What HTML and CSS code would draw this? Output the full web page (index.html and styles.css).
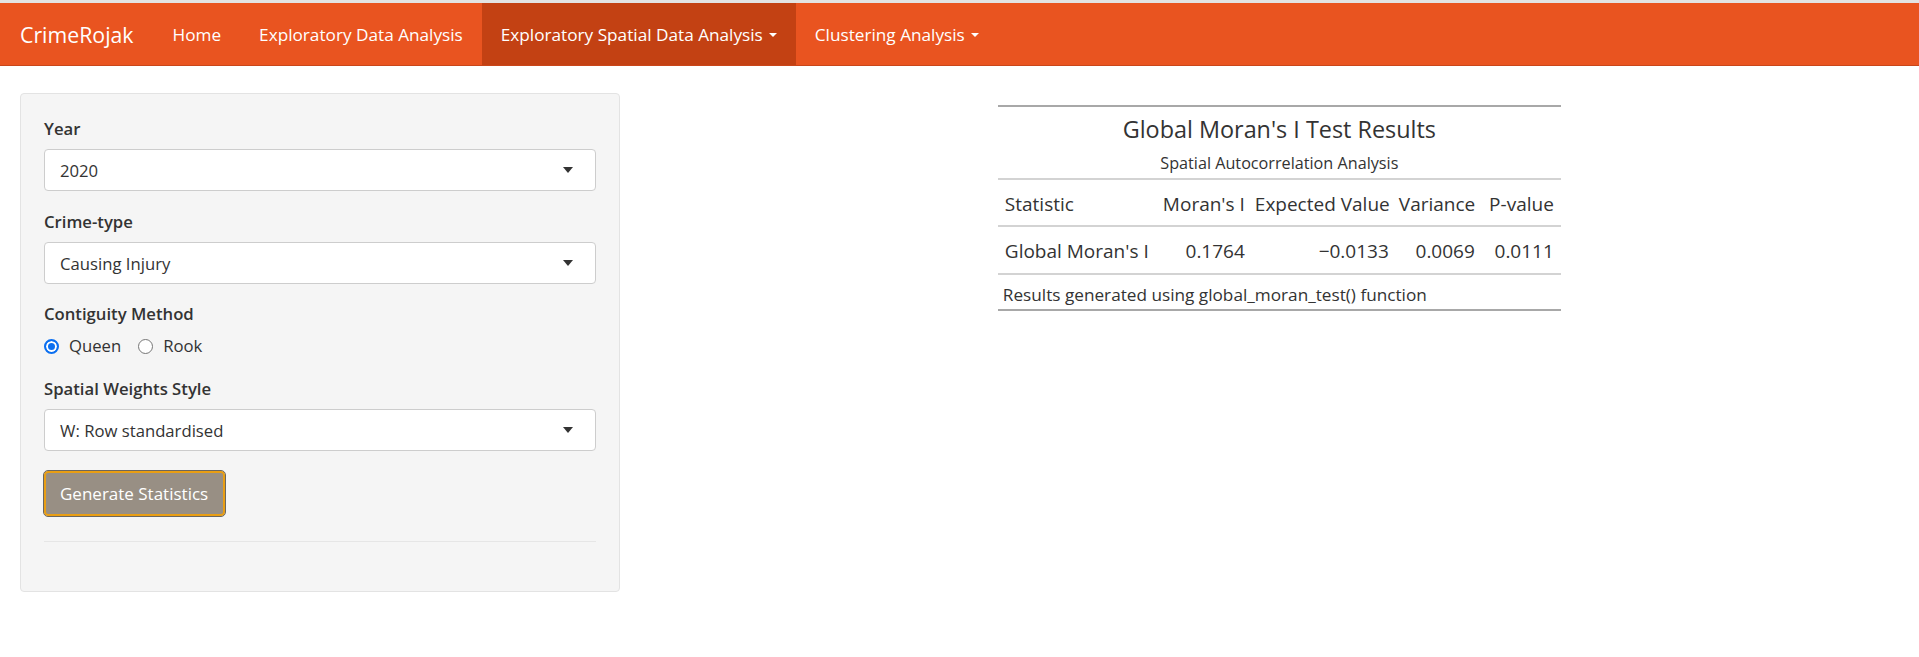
FILE: index.html
```html
<!DOCTYPE html>
<html lang="en">
<head>
<meta charset="utf-8">
<title>CrimeRojak</title>
<link rel="stylesheet" href="styles.css">
</head>
<body>
<div class="topstrip"></div>
<nav class="navbar">
  <a class="brand" href="#">CrimeRojak</a>
  <ul class="nav">
    <li><a href="#">Home</a></li>
    <li><a href="#">Exploratory Data Analysis</a></li>
    <li class="active"><a href="#">Exploratory Spatial Data Analysis<span class="caret"></span></a></li>
    <li><a href="#">Clustering Analysis<span class="caret"></span></a></li>
  </ul>
</nav>
<main class="layout">
  <aside class="sidebar">
    <div class="well">
      <div class="group">
        <label class="ctl-label">Year</label>
        <div class="select"><span>2020</span><span class="sel-caret"></span></div>
      </div>
      <div class="group">
        <label class="ctl-label">Crime-type</label>
        <div class="select"><span>Causing Injury</span><span class="sel-caret"></span></div>
      </div>
      <div class="group radio-group">
        <label class="ctl-label">Contiguity Method</label>
        <div class="radios">
          <span class="radio"><span class="dot checked"></span>Queen</span>
          <span class="radio"><span class="dot"></span>Rook</span>
        </div>
      </div>
      <div class="group">
        <label class="ctl-label">Spatial Weights Style</label>
        <div class="select"><span>W: Row standardised</span><span class="sel-caret"></span></div>
      </div>
      <button class="btn">Generate Statistics</button>
      <hr class="rule">
    </div>
  </aside>
  <section class="mainpanel">
    <table class="gt">
      <colgroup>
        <col class="c1"><col class="c2"><col class="c3"><col class="c4"><col class="c5">
      </colgroup>
      <thead>
        <tr><th colspan="5" class="title">Global Moran's I Test Results</th></tr>
        <tr><th colspan="5" class="subtitle">Spatial Autocorrelation Analysis</th></tr>
        <tr class="cols">
          <th class="left">Statistic</th>
          <th>Moran's I</th>
          <th>Expected Value</th>
          <th>Variance</th>
          <th class="last">P-value</th>
        </tr>
      </thead>
      <tbody>
        <tr class="row">
          <td class="left">Global Moran's I</td>
          <td>0.1764</td>
          <td>−0.0133</td>
          <td>0.0069</td>
          <td class="last">0.0111</td>
        </tr>
      </tbody>
      <tfoot>
        <tr><td colspan="5" class="note">Results generated using global_moran_test() function</td></tr>
      </tfoot>
    </table>
  </section>
</main>
</body>
</html>
```
FILE: styles.css
```css
* { box-sizing: border-box; }
html, body { margin: 0; padding: 0; background: #fff; }
body {
  font-family: "Open Sans", "Noto Sans", sans-serif;
  font-size: 16.7px;
  color: #333;
}
.topstrip { height: 3px; background: #e3e3e3; }
.navbar {
  display: flex;
  align-items: stretch;
  height: 63px;
  background: #e95420;
  border-bottom: 1px solid #c9461a;
}
.brand {
  display: flex;
  align-items: center;
  padding-left: 20px;
  margin-right: 20px;
  color: #fff;
  font-size: 21.3px;
  text-decoration: none;
}
.nav { display: flex; list-style: none; margin: 0; padding: 0; }
.nav li { display: flex; }
.nav a {
  display: flex;
  align-items: center;
  padding: 0 19px;
  color: #fff;
  text-decoration: none;
  font-size: 17.2px;
}
.nav li.active a { background: #c34113; }
.caret {
  display: inline-block;
  width: 0; height: 0;
  margin-left: 6px;
  margin-top: 2px;
  border-top: 4px solid #fff;
  border-left: 4px solid transparent;
  border-right: 4px solid transparent;
}
.layout { display: grid; grid-template-columns: 1fr 2fr; }
.sidebar { padding: 27px 20px 0; }
.well {
  background: #f5f5f5;
  border: 1px solid #e3e3e3;
  border-radius: 4px;
  padding: 24px 23px 49px;
}
.group { margin-bottom: 20px; }
.ctl-label {
  display: block;
  font-weight: 600;
  line-height: 22px;
  margin-bottom: 9px;
  color: #333;
}
.select {
  position: relative;
  display: flex;
  align-items: center;
  height: 42px;
  padding-left: 15px;
  background: #fff;
  border: 1px solid #cdcdcd;
  border-radius: 4px;
  color: #333;
}
.sel-caret {
  position: absolute;
  right: 22px;
  top: 17px;
  width: 0; height: 0;
  border-top: 6px solid #333;
  border-left: 5.5px solid transparent;
  border-right: 5.5px solid transparent;
}
.radio-group { margin-top: -1px; margin-bottom: 21px; }
.radio-group .ctl-label { margin-bottom: 10px; }
.radios { display: flex; line-height: 22px; }
.radio { display: inline-flex; align-items: center; margin-right: 17px; }
.dot {
  width: 15px; height: 15px;
  border-radius: 50%;
  border: 1px solid #767676;
  background: #fff;
  margin-right: 10px;
}
.dot.checked {
  border: 2px solid #0b6ff0;
  box-shadow: inset 0 0 0 2px #fff;
  background: #0b6ff0;
}
.btn {
  display: block;
  height: 45px;
  width: 181px;
  padding: 0 14px;
  font-family: inherit;
  font-size: 17px;
  color: #fff;
  background: #988f84;
  border: 2px solid #e99e14;
  border-radius: 4px;
  outline: 1px solid #6b6760;
  outline-offset: 0;
  text-align: left;
  white-space: nowrap;
}
.rule {
  margin: 25px 0 0;
  border: 0;
  border-top: 1px solid #e6e6e6;
}
.mainpanel { display: flex; justify-content: center; align-items: flex-start; padding-top: 39px; }
.gt {
  border-collapse: collapse;
  table-layout: fixed;
  width: 563px;
  font-family: "Open Sans", "Noto Sans", sans-serif;
  color: #333;
  font-size: 19px;
  border-top: 2px solid #a8a8a8;
  border-bottom: 2px solid #a8a8a8;
}
.gt .c1 { width: 154px; }
.gt .c2 { width: 98px; }
.gt .c3 { width: 144px; }
.gt .c4 { width: 86px; }
.gt .c5 { width: 81px; }
.gt th, .gt td { padding: 0 5px; font-weight: normal; text-align: right; white-space: nowrap; }
.gt .left { text-align: left; padding-left: 7px; }
.gt .last { padding-right: 7px; }
.gt .title {
  text-align: center;
  font-size: 23.4px;
  line-height: 32px;
  padding-top: 6px;
  padding-bottom: 2px;
}
.gt .subtitle {
  text-align: center;
  font-size: 16.2px;
  line-height: 22px;
  padding-top: 5px;
  padding-bottom: 4px;
  border-bottom: 2px solid #d3d3d3;
}
.gt .cols th {
  line-height: 26px;
  padding-top: 11px;
  padding-bottom: 8px;
  border-bottom: 2px solid #d3d3d3;
}
.gt .row td {
  line-height: 26px;
  padding-top: 11px;
  padding-bottom: 9px;
  border-bottom: 2px solid #d3d3d3;
}
.gt .note {
  text-align: left;
  font-size: 17.2px;
  line-height: 22px;
  padding-top: 9px;
  padding-bottom: 3px;
}
```
